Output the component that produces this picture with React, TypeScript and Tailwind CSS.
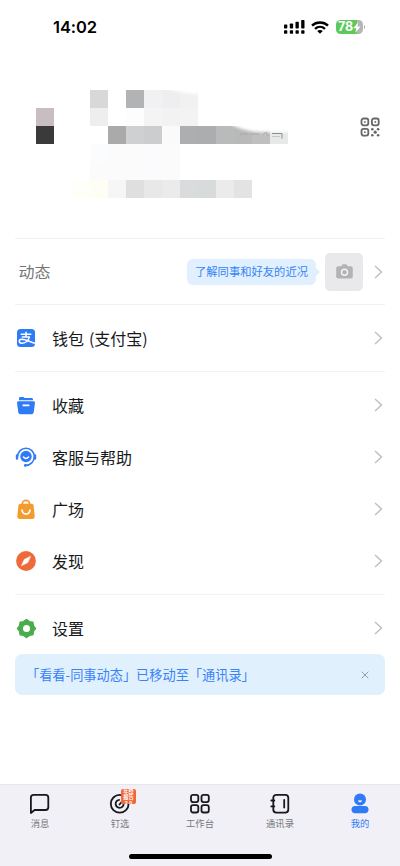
import type { ReactNode } from "react";

const mosaic: string[][] = [
  ["", "", "", "#d8d8d9", "", "#b1b3b5", "#f1f1f3", "#eeeef0", "#f1f1f2", "", "", "", "", ""],
  ["#c8bec1", "", "", "#eeeeee", "", "#fdfdfd", "#f4f4f4", "#f2f2f2", "#f3f3f3", "", "", "", "", ""],
  ["#3a3a3a", "", "", "", "#aaaaaa", "#cfd0d2", "#cccdcf", "#fafafa", "#adaeb0", "#acadaf", "#b9baba", "#b9b9b9", "#bfbfbf", "#e6e9e8"],
  ["", "", "", "#fafcfe", "#fbfbfc", "#fbfbfc", "#fbfbfd", "#fbfbfc", "", "", "", "", "", ""],
  ["", "", "", "#fbfbfc", "#fbfbfc", "#fbfbfc", "#fbfbfd", "#fbfbfc", "", "", "", "", "", ""],
  ["", "", "#fffffa", "#fffef5", "#f6f6f6", "#dfdfdf", "#e8e8e8", "#ebebeb", "#d9dbdc", "#d8dbdc", "#ebebeb", "#e3e3e3", "", ""],
];

function StatusBar() {
  return (
    <header className="flex h-[54px] items-center justify-between pl-[53px] pr-[35px]">
      <span className="font-['Inter'] text-[16.5px] font-semibold leading-none tracking-[-0.1px] text-black">
        14:02
      </span>
      <div className="flex items-center">
        <svg width="21" height="14" viewBox="0 0 21 14" fill="#000">
          <rect x="0" y="4.5" width="3.3" height="4" rx="0.7" />
          <rect x="5.8" y="3.5" width="3.3" height="5" rx="0.7" />
          <rect x="11.5" y="1.8" width="3.3" height="6.7" rx="0.7" />
          <rect x="17.2" y="0" width="3.3" height="8.5" rx="0.7" />
          <rect x="0" y="10.2" width="3.3" height="3.5" rx="0.7" />
          <rect x="5.8" y="10.2" width="3.3" height="3.5" rx="0.7" />
          <rect x="11.5" y="10.2" width="3.3" height="3.5" rx="0.7" />
          <rect x="17.2" y="10.2" width="3.3" height="3.5" rx="0.7" />
        </svg>
        <svg className="ml-1.5" width="18" height="13" viewBox="0 0 18 13" fill="none" stroke="#000">
          <path d="M1 4.6C5.4.4 12.6.4 17 4.6" strokeWidth="2.4" />
          <path d="M4 7.8C6.9 5.1 11.1 5.1 14 7.8" strokeWidth="2.3" />
          <path d="M9 12.8 6.2 10C7.8 8.6 10.2 8.6 11.8 10Z" fill="#000" stroke="none" />
        </svg>
        <div className="ml-[7px] flex h-[14px] w-[27px] items-center rounded-[4.5px] bg-[linear-gradient(to_right,#5dc85c_78%,#b5b5b5_78%)] pl-[2.5px]">
          <span className="font-['Inter'] text-[12.5px] font-bold leading-none tracking-[-0.2px] text-white">
            78
          </span>
          <svg width="8" height="11" viewBox="0 0 8 11" fill="#fff">
            <path d="M5.4 0 .3 6.2h3L2.2 11l5.3-6.4H4.4Z" />
          </svg>
        </div>
        <span className="ml-px h-[4px] w-[1.5px] rounded-r bg-[#b5b5b5]" />
      </div>
    </header>
  );
}

function QrIcon() {
  return (
    <svg width="20" height="20" viewBox="0 0 20 20" fill="none" stroke="#66676a" strokeWidth="1.8">
      <rect x="1.5" y="1.5" width="6.8" height="6.8" rx="2" />
      <rect x="11.9" y="1.5" width="6.8" height="6.8" rx="2" />
      <rect x="1.5" y="11.8" width="6.8" height="6.8" rx="2" />
      <g fill="#66676a" stroke="none">
        <circle cx="4.9" cy="4.9" r="0.9" />
        <circle cx="15.3" cy="4.9" r="0.9" />
        <circle cx="4.9" cy="15.2" r="0.9" />
        <circle cx="12.3" cy="12.2" r="1.3" />
        <circle cx="18.1" cy="12.2" r="1.3" />
        <circle cx="15.2" cy="15.2" r="1.6" />
        <circle cx="12.3" cy="18.2" r="1.3" />
        <circle cx="18.1" cy="18.2" r="1.3" />
      </g>
    </svg>
  );
}

function Profile() {
  return (
    <section className="flex h-[184px] items-start justify-between pl-9 pr-5 pt-9">
      <div className="relative grid grid-cols-[repeat(14,18px)] grid-rows-[repeat(6,18px)]">
        {mosaic.flat().map((color, i) => (
          <span key={i} style={{ backgroundColor: color || "transparent" }} />
        ))}
        <svg className="absolute left-0 top-0" width="252" height="108" viewBox="0 0 252 108" fill="none">
          <defs>
            <filter id="soft" x="-20%" y="-50%" width="140%" height="200%">
              <feGaussianBlur stdDeviation="1.4" />
            </filter>
          </defs>
          <path d="M132-3h34v7q-16 0-34-5Z" fill="#fff" filter="url(#soft)" />
          <path d="M196 32h62v10q-34 1-44-1t-18-6Z" fill="#fff" filter="url(#soft)" />
          <path d="M204 44h8M215 44h8M227 45l3-3 2 4" stroke="#a7a9a8" />
          <path d="M236 43.5h10v5" stroke="#8d8f8e" />
          <path d="M236 46.5h8" stroke="#c5c7c6" />
        </svg>
      </div>
      <div className="mt-[26.5px]">
        <QrIcon />
      </div>
    </section>
  );
}

function Chevron() {
  return (
    <svg width="9" height="14" viewBox="0 0 9 14" fill="none" stroke="#bcbec0" strokeWidth="1.4">
      <path d="m1 1 6.5 6L1 13" />
    </svg>
  );
}

function Row({ icon, label, tall = false }: { icon: ReactNode; label: string; tall?: boolean }) {
  return (
    <div className={`flex items-center pr-0.5 ${tall ? "h-[66px]" : "h-[52px]"}`}>
      <span className="flex w-[22px] justify-center">{icon}</span>
      <span className="mb-px ml-[15px] flex-1 text-[16px] leading-6 text-[#171a1d] [word-spacing:1.3px]">
        {label}
      </span>
      <Chevron />
    </div>
  );
}

function AlipayIcon() {
  return (
    <svg width="18" height="18" viewBox="0 0 18 18">
      <rect width="18" height="18" rx="3.5" fill="#2f7bf5" />
      <g fill="none" stroke="#fff" strokeWidth="1.5">
        <path d="M3.7 5.3h10.6M9 2.8v5M4.8 7.900h8" />
        <path d="M12.500 7.900C11.300 12 7.900 14.300 4.800 14.200 1.300 14 1.500 10.500 4.500 10.200c3.500-.3 7.500 2.300 13.500 4.200" />
      </g>
    </svg>
  );
}

function FolderIcon() {
  return (
    <svg width="20" height="19" viewBox="0 0 20 19" fill="#2f7bf5">
      <path d="M3 4.2V2.2Q3 .9 4.3.9h3l1.400 1.200h7q1.300 0 1.300 1.300v.8Z" />
      <path d="M2.300 5.200h15.400q1.500 0 1.300 1.500l-1.300 9.500q-.3 2-2.300 2H4.600q-2 0-2.300-2L1 6.700Q.8 5.200 2.300 5.200Z" />
      <path d="M7.200 9.400h5.600" stroke="#fff" strokeWidth="1.6" strokeLinecap="round" />
    </svg>
  );
}

function SupportIcon() {
  return (
    <svg width="22" height="22" viewBox="0 0 22 22" fill="none">
      <path d="M2.700 10.500a8.300 8.300 0 0 1 16.600 0c0 5-3.700 8.900-9 8.900" stroke="#2f7bf5" strokeWidth="1.6" />
      <path d="M2 9.500v3M20 9.500v3" stroke="#2f7bf5" strokeWidth="2.4" strokeLinecap="round" />
      <circle cx="11" cy="10.5" r="5.7" fill="#2f7bf5" />
      <path d="M8.400 11.100q2.600 2.700 5.200 0" stroke="#fff" strokeWidth="1.4" strokeLinecap="round" />
      <circle cx="10.3" cy="19.4" r="1.4" fill="#2f7bf5" />
    </svg>
  );
}

function BagIcon() {
  return (
    <svg width="20" height="21" viewBox="0 0 20 21" fill="none">
      <path d="M6.400 6V4.500a3.600 3.100 0 0 1 7.200 0V6" stroke="#f29b2f" strokeWidth="1.7" />
      <path d="M4.300 4.800h11.400q1.700 0 1.900 1.700l1.100 11q.2 2.500-2.200 2.500h-13q-2.400 0-2.200-2.500l1.100-11q.2-1.700 1.900-1.700Z" fill="#f29b2f" />
      <path d="M6 11.200q.7 3.900 4 3.900t4-3.900" stroke="#fff" strokeWidth="1.7" strokeLinecap="round" />
    </svg>
  );
}

function CompassIcon() {
  return (
    <svg width="20" height="20" viewBox="0 0 20 20">
      <circle cx="10" cy="10" r="9.9" fill="#ef6a3a" />
      <path d="M14.600 5.300 11.800 11.600 5.400 14.700 8.300 8.400Z" fill="#fff" stroke="#fff" strokeWidth=".6" strokeLinejoin="round" />
    </svg>
  );
}

function GearIcon() {
  return (
    <svg width="21" height="21" viewBox="0 0 21 21">
      <path
        d="M10.500 1.700 13.300 3.800 16.700 4.300 17.200 7.700 19.300 10.500 17.200 13.300 16.700 16.700 13.300 17.200 10.500 19.300 7.700 17.200 4.300 16.700 3.800 13.300 1.700 10.500 3.800 7.700 4.300 4.300 7.700 3.800Z"
        fill="#49ad4d"
        stroke="#49ad4d"
        strokeWidth="1.8"
        strokeLinejoin="round"
      />
      <circle cx="10.5" cy="10.5" r="3.5" fill="#fff" />
    </svg>
  );
}

function Moments() {
  return (
    <div className="flex h-[65px] items-center pl-[3.5px] pr-0.5">
      <span className="mb-0.5 flex-1 text-[16px] leading-6 text-[#747678]">动态</span>
      <div className="relative flex h-[26px] w-[129px] items-center justify-center rounded-[6px] bg-[#e1f0fe]">
        <span className="whitespace-nowrap text-[11.3px] leading-none text-[#3784f7]">
          了解同事和好友的近况
        </span>
        <svg className="absolute -right-[3.5px] top-[9px]" width="4" height="8" viewBox="0 0 4 8">
          <path d="M0 0 4 4 0 8Z" fill="#e1f0fe" />
        </svg>
      </div>
      <div className="ml-[9px] mr-[11px] flex size-[38px] items-center justify-center rounded-[5px] bg-[#e9e9eb]">
        <svg width="17" height="15" viewBox="0 0 17 15">
          <path
            d="M5.200 2.200 6 1Q6.400.3 7.200.3h2.600q.8 0 1.200.7l.8 1.200h3q2 0 2 2v8.300q0 2-2 2H2.200q-2 0-2-2V4.200q0-2 2-2Z"
            fill="#b2b3b5"
          />
          <circle cx="8.500" cy="8.200" r="3" fill="none" stroke="#f4f4f5" strokeWidth="1.5" />
        </svg>
      </div>
      <Chevron />
    </div>
  );
}

function Notice() {
  return (
    <div className="flex h-[41px] items-center justify-between rounded-[7px] bg-[#e1f0fd] pl-[11px] pr-4">
      <span className="whitespace-nowrap text-[13.2px] leading-none text-[#3784f7]">
        「看看-同事动态」已移动至「通讯录」
      </span>
      <svg width="8" height="8" viewBox="0 0 8 8" stroke="#929da8" strokeWidth="1">
        <path d="m.7.7 6.600 6.600M7.300.7.700 7.300" />
      </svg>
    </div>
  );
}

const tabs: { label: string; icon: ReactNode; active?: boolean }[] = [
  {
    label: "消息",
    icon: (
      <svg width="22" height="22" viewBox="0 0 22 22" fill="none" stroke="#17191c" strokeWidth="1.8">
        <path d="M1.900 20V4.500q0-2.700 2.700-2.700h12q2.700 0 2.700 2.700v9.800q0 2.700-2.700 2.700H5.600Z" strokeLinejoin="round" />
      </svg>
    ),
  },
  {
    label: "钉选",
    icon: (
      <span className="relative">
        <svg width="22" height="22" viewBox="0 0 22 22" fill="none" stroke="#17191c" strokeWidth="1.8">
          <circle cx="10.7" cy="10.8" r="8.9" />
          <path d="M13.900 8.500a4 4 0 1 1-3.100-1.700" />
          <path d="m10.500 11.500 5-6" strokeLinecap="round" />
        </svg>
        <span className="absolute left-[12px] top-[-4px] flex h-[15px] w-[15px] flex-col items-center justify-center overflow-hidden rounded-[2px] bg-[#f1673a] font-['Liberation_Sans','Noto_Sans_CJK_SC',sans-serif] text-[5.3px] font-bold leading-[6px] text-white">
          <span className="h-[6px] whitespace-nowrap">年终</span>
          <span className="h-[6px] whitespace-nowrap">报告</span>
          <span className="h-[6px] whitespace-nowrap">2.0</span>
        </span>
      </span>
    ),
  },
  {
    label: "工作台",
    icon: (
      <svg width="22" height="22" viewBox="0 0 22 22" fill="none" stroke="#17191c" strokeWidth="1.8">
        <rect x="2" y="1.8" width="7.3" height="7.3" rx="2" />
        <rect x="12.5" y="1.8" width="7.3" height="7.3" rx="2" />
        <rect x="2" y="12.2" width="7.3" height="7.3" rx="2" />
        <rect x="12.5" y="12.2" width="7.3" height="7.3" rx="2" />
      </svg>
    ),
  },
  {
    label: "通讯录",
    icon: (
      <svg width="22" height="22" viewBox="0 0 22 22" fill="none" stroke="#17191c" strokeWidth="1.8">
        <rect x="4.3" y="1.8" width="15" height="17.8" rx="3" />
        <path d="M2.300 7.500h3M2.300 13.400h3M15.200 7v7.500" strokeLinecap="round" />
      </svg>
    ),
  },
  {
    label: "我的",
    active: true,
    icon: (
      <svg width="22" height="22" viewBox="0 0 22 22" fill="#2f7bf5">
        <circle cx="11" cy="6.5" r="6" />
        <rect x="2.5" y="13" width="17" height="7.2" rx="3.6" />
        <path d="M8.900 7.500h4.200q-.3 1.700-2.100 1.700t-2.100-1.700Z" fill="#fff" />
      </svg>
    ),
  },
];

function TabBar() {
  return (
    <footer className="flex h-[82px] flex-col items-center justify-between border-t border-[#e6e6ea] bg-[#f1f0f6] pb-[7px] pt-[8px]">
      <nav className="grid w-full grid-cols-5">
        {tabs.map((tab) => (
          <div key={tab.label} className="flex flex-col items-center">
            <span className="flex h-[22px]">{tab.icon}</span>
            <span
              className={`mt-[2px] text-[9.3px] leading-3 ${
                tab.active ? "text-[#2f7bf5]" : "text-[#77787d]"
              }`}
            >
              {tab.label}
            </span>
          </div>
        ))}
      </nav>
      <div className="h-[5px] w-[143px] rounded-full bg-black" />
    </footer>
  );
}

function App() {
  return (
    <div className="flex h-[866px] w-[400px] flex-col overflow-hidden bg-white font-['Noto_Sans_CJK_SC',sans-serif]">
      <StatusBar />
      <Profile />
      <main className="flex-1 px-[15px]">
        <div className="border-t border-[#f1f2f3]">
          <Moments />
        </div>
        <div className="border-y border-[#f1f2f3]">
          <Row icon={<AlipayIcon />} label="钱包 (支付宝)" tall />
        </div>
        <div className="pb-[7px] pt-[7px]">
          <Row icon={<FolderIcon />} label="收藏" />
          <Row icon={<SupportIcon />} label="客服与帮助" />
          <Row icon={<BagIcon />} label="广场" />
          <Row icon={<CompassIcon />} label="发现" />
        </div>
        <div className="h-[60px] border-t border-[#f1f2f3]">
          <Row icon={<GearIcon />} label="设置" tall />
        </div>
        <Notice />
      </main>
      <TabBar />
    </div>
  );
}

export default App;
